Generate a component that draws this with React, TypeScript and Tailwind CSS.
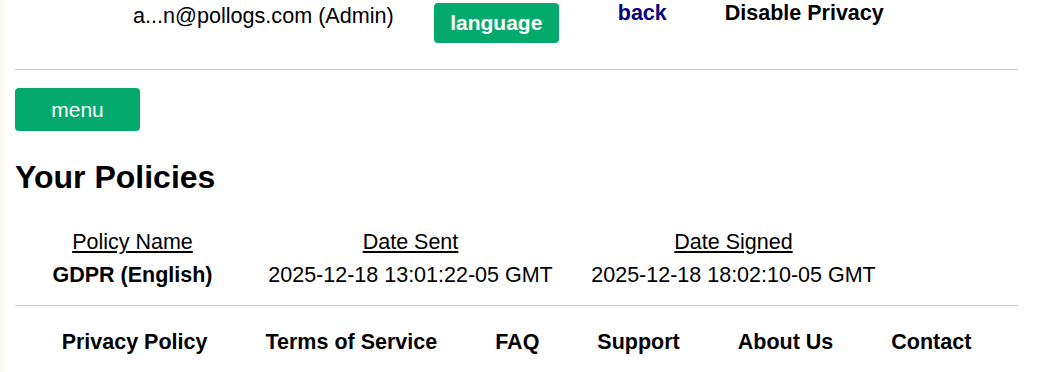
import React from 'react';

const footerLinks = ['Privacy Policy', 'Terms of Service', 'FAQ', 'Support', 'About Us', 'Contact'];

const policies = [
  { name: 'GDPR (English)', sent: '2025-12-18 13:01:22-05 GMT', signed: '2025-12-18 18:02:10-05 GMT' },
];

export default function App() {
  return (
    <div
      className="min-h-[372px] w-full bg-white border-l-[5px] border-[#fffaf3] pl-[10px] pr-[20px] text-black text-[21.5px]"
      style={{ fontFamily: '"Liberation Sans", Arial, Helvetica, sans-serif' }}
    >
      {/* Top bar */}
      <div className="flex items-start pt-[3px] pl-[118px] h-[43px]">
        <span className="leading-[25px] text-[21.6px]">a...n@pollogs.com (Admin)</span>
        <button className="ml-[40px] w-[125px] h-[40px] rounded-[4px] bg-[#04aa6d] text-white font-bold text-[21px] leading-[24px] pt-[8px] pb-[8px]">
          language
        </button>
        <a className="ml-[59px] -mt-[2px] font-bold text-[#000080] leading-[25px] cursor-pointer">back</a>
        <a className="ml-[58px] -mt-[2px] font-bold leading-[25px] cursor-pointer">Disable Privacy</a>
      </div>

      <hr className="mt-[26px] border-0 border-t border-[#cccccc]" />

      <button className="mt-[18px] w-[125px] h-[43px] rounded-[4px] bg-[#04aa6d] text-white text-[21px] leading-[24px]">
        menu
      </button>

      <h1 className="mt-[28px] text-[32px] font-bold leading-[37px]">Your Policies</h1>

      {/* Policies table */}
      <div className="mt-[30px] grid grid-cols-[235px_321px_325px] text-center leading-[33px]">
        <div className="underline">Policy Name</div>
        <div className="underline">Date Sent</div>
        <div className="underline">Date Signed</div>
        {policies.map((p) => (
          <React.Fragment key={p.name}>
            <div className="font-bold">{p.name}</div>
            <div>{p.sent}</div>
            <div>{p.signed}</div>
          </React.Fragment>
        ))}
      </div>

      <hr className="mt-[13px] border-0 border-t border-[#cccccc]" />

      {/* Footer */}
      <div className="mt-[24px] flex justify-center gap-[58px] font-bold leading-[25px]">
        {footerLinks.map((l) => (
          <a key={l} className="cursor-pointer">{l}</a>
        ))}
      </div>
    </div>
  );
}
